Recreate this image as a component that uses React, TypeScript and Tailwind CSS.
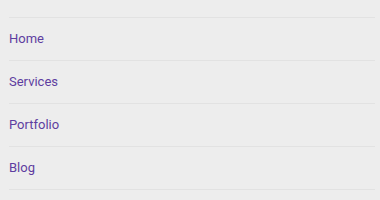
import React from "react";

const items = ["Home", "Services", "Portfolio", "Blog"];

export default function App() {
  return (
    <div className="w-[380px] h-[200px] bg-[#ededed] pt-[17px] pl-[9px] pr-[5px]" style={{ fontFamily: "Roboto, 'Noto Sans', sans-serif" }}>
      <ul className="border-t border-[#e2e2e2]">
        {items.map((t) => (
          <li key={t} className="h-[43px] border-b border-[#e2e2e2] flex items-center">
            <a className="text-[13px] text-[#5e3ea0]">{t}</a>
          </li>
        ))}
      </ul>
    </div>
  );
}
